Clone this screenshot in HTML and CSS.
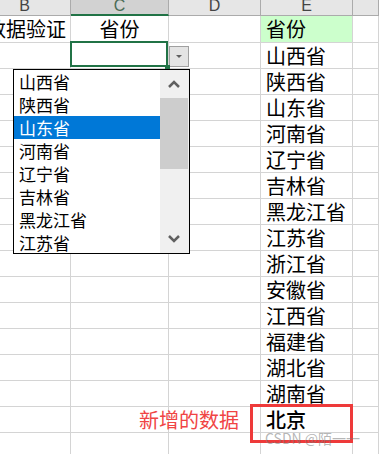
FILE: index.html
```html
<!DOCTYPE html>
<html lang="zh-CN">
<head>
  <meta charset="UTF-8">
  <title>数据验证</title>
  <link rel="stylesheet" href="styles.css">
</head>
<body>

  <div class="sheet">
    <div class="row head">
      <div class="col">B</div>
      <div class="col active">C</div>
      <div class="col">D</div>
      <div class="col">E</div>
      <div class="col"></div>
    </div>

    <div class="row first">
      <div class="cell right">数据验证</div>
      <div class="cell center">省份</div>
      <div class="cell"></div>
      <div class="cell title">省份</div>
      <div class="cell"></div>
    </div>

    <div class="row">
      <div class="cell"></div>
      <div class="cell selected">
        <span class="drop-btn"></span>
        <div class="dropdown">
          <ul class="options">
            <li>山西省</li>
            <li>陕西省</li>
            <li class="current">山东省</li>
            <li>河南省</li>
            <li>辽宁省</li>
            <li>吉林省</li>
            <li>黑龙江省</li>
            <li>江苏省</li>
          </ul>
          <div class="scrollbar">
            <span class="arrow">
              <svg width="12" height="8" viewBox="0 0 12 8"><polyline points="1,7 6,2 11,7" /></svg>
            </span>
            <span class="thumb"></span>
            <span class="arrow bottom">
              <svg width="12" height="8" viewBox="0 0 12 8"><polyline points="1,1 6,6 11,1" /></svg>
            </span>
          </div>
        </div>
      </div>
      <div class="cell"></div>
      <div class="cell">山西省</div>
      <div class="cell"></div>
    </div>

    <div class="row"><div class="cell"></div><div class="cell"></div><div class="cell"></div><div class="cell">陕西省</div><div class="cell"></div></div>
    <div class="row"><div class="cell"></div><div class="cell"></div><div class="cell"></div><div class="cell">山东省</div><div class="cell"></div></div>
    <div class="row"><div class="cell"></div><div class="cell"></div><div class="cell"></div><div class="cell">河南省</div><div class="cell"></div></div>
    <div class="row"><div class="cell"></div><div class="cell"></div><div class="cell"></div><div class="cell">辽宁省</div><div class="cell"></div></div>
    <div class="row"><div class="cell"></div><div class="cell"></div><div class="cell"></div><div class="cell">吉林省</div><div class="cell"></div></div>
    <div class="row"><div class="cell"></div><div class="cell"></div><div class="cell"></div><div class="cell">黑龙江省</div><div class="cell"></div></div>
    <div class="row"><div class="cell"></div><div class="cell"></div><div class="cell"></div><div class="cell">江苏省</div><div class="cell"></div></div>
    <div class="row"><div class="cell"></div><div class="cell"></div><div class="cell"></div><div class="cell">浙江省</div><div class="cell"></div></div>
    <div class="row"><div class="cell"></div><div class="cell"></div><div class="cell"></div><div class="cell">安徽省</div><div class="cell"></div></div>
    <div class="row"><div class="cell"></div><div class="cell"></div><div class="cell"></div><div class="cell">江西省</div><div class="cell"></div></div>
    <div class="row"><div class="cell"></div><div class="cell"></div><div class="cell"></div><div class="cell">福建省</div><div class="cell"></div></div>
    <div class="row"><div class="cell"></div><div class="cell"></div><div class="cell"></div><div class="cell">湖北省</div><div class="cell"></div></div>
    <div class="row"><div class="cell"></div><div class="cell"></div><div class="cell"></div><div class="cell">湖南省</div><div class="cell"></div></div>
    <div class="row">
      <div class="cell"></div>
      <div class="cell"></div>
      <div class="cell note"><span>新增的数据</span></div>
      <div class="cell added">北京</div>
      <div class="cell"></div>
    </div>
    <div class="row"><div class="cell"></div><div class="cell"></div><div class="cell"></div><div class="cell"></div><div class="cell"></div></div>
  </div>

  <div class="watermark">CSDN @陌一一</div>

</body>
</html>
```

FILE: styles.css
```css
* {
  box-sizing: border-box;
}

body {
  margin: 0;
  overflow: hidden;
  background: #fff;
  font-family: "Noto Sans CJK SC", sans-serif;
}

.sheet {
  margin-left: -21px;
}

.row {
  display: grid;
  grid-template-columns: 92px 98px 92px 92px 1fr;
  height: 26px;
}

.row.head {
  height: 16px;
  background: #e6e6e6;
}

.row.first {
  height: 27px;
}

/* column headers */
.col {
  border-right: 1px solid #ababab;
  border-bottom: 1px solid #ababab;
  text-align: center;
  font-family: "Liberation Sans", sans-serif;
  font-size: 16px;
  line-height: 11px;
  color: #444;
}

.col.active {
  background: #d2d2d2;
  border-bottom: 2px solid #217346;
  color: #4a6b56;
}

/* cells */
.cell {
  display: flex;
  align-items: center;
  padding-left: 5px;
  border-right: 1px solid #d4d4d4;
  border-bottom: 1px solid #d4d4d4;
  font-size: 20px;
  line-height: 20px;
  color: #000;
  white-space: nowrap;
}

.cell.right {
  justify-content: flex-end;
  padding-right: 4px;
}

.cell.center {
  justify-content: center;
  padding-left: 0;
}

.cell.title {
  background: #ccffcc;
}

.cell.note {
  justify-content: flex-end;
  padding-right: 21px;
  color: #f04444;
}

.cell.added {
  position: relative;
  font-weight: 500;
}

.cell.added::after {
  content: "";
  position: absolute;
  left: -11px;
  top: -3px;
  width: 97px;
  height: 33px;
  border: 3px solid #ee3a3a;
}

/* active cell with list validation */
.cell.selected {
  position: relative;
}

.cell.selected::before {
  content: "";
  position: absolute;
  left: -1px;
  top: -2px;
  right: 0;
  bottom: 1px;
  border: 2px solid #217346;
}

.cell.selected::after {
  content: "";
  position: absolute;
  right: -2px;
  bottom: -1px;
  width: 5px;
  height: 4px;
  background: #217346;
}

.drop-btn {
  position: absolute;
  left: calc(100% + 1px);
  top: 3px;
  width: 20px;
  height: 21px;
  border: 1px solid #a0a0a0;
  background: #e4e4e4;
}

.drop-btn::after {
  content: "";
  position: absolute;
  left: 6px;
  top: 8px;
  border-left: 3.5px solid transparent;
  border-right: 3.5px solid transparent;
  border-top: 3px solid #5f5f5f;
}

.dropdown {
  position: absolute;
  left: -58px;
  top: 26px;
  z-index: 5;
  width: 177px;
  height: 185px;
  display: flex;
  border: 1px solid #000;
  background: #fff;
  overflow: hidden;
}

.options {
  list-style: none;
  margin: 0;
  padding: 0;
  width: 146px;
}

.options li {
  height: 23px;
  line-height: 23px;
  padding-left: 5px;
  font-size: 17px;
  color: #000;
}

.options li.current {
  background: #0078d7;
  color: #fff;
}

.scrollbar {
  width: 29px;
  display: flex;
  flex-direction: column;
  background: #f0f0f0;
}

.arrow {
  height: 28px;
  display: flex;
  align-items: center;
  justify-content: center;
  padding-right: 1px;
}

.arrow.bottom {
  margin-top: auto;
}

.arrow svg polyline {
  fill: none;
  stroke: #606060;
  stroke-width: 2.5;
}

.thumb {
  width: 28px;
  height: 71px;
  background: #cdcdcd;
}

.watermark {
  position: absolute;
  left: 265px;
  top: 431px;
  font-size: 14px;
  line-height: 14px;
  color: rgba(120, 120, 120, 0.55);
}
```
